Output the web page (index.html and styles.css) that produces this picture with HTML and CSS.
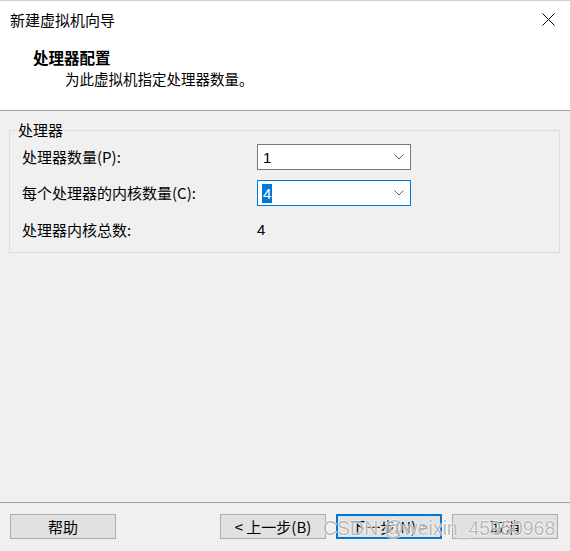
FILE: index.html
```html
<!DOCTYPE html>
<html lang="zh-CN">
<head>
<meta charset="utf-8">
<title>新建虚拟机向导</title>
<link rel="stylesheet" href="styles.css">
</head>
<body>
<div class="window">
  <div class="top">
    <div class="titlebar">
      <span class="title">新建虚拟机向导</span>
      <svg class="close" width="13" height="13" viewBox="0 0 13 13"><path d="M0.5 0.5 L12.5 12.5 M12.5 0.5 L0.5 12.5" stroke="#000" stroke-width="1" fill="none"/></svg>
    </div>
    <div class="heading">处理器配置</div>
    <div class="sub">为此虚拟机指定处理器数量。</div>
  </div>
  <div class="content">
    <fieldset class="group">
      <legend>处理器</legend>
      <div class="row first">
        <span class="label">处理器数量(P):</span>
        <div class="combo"><span class="val">1</span><svg class="chev" width="10" height="6" viewBox="0 0 10 6"><path d="M0.5 0.5 L5 5 L9.5 0.5" stroke="#5a5a5a" stroke-width="1" fill="none"/></svg></div>
      </div>
      <div class="row">
        <span class="label">每个处理器的内核数量(C):</span>
        <div class="combo focus"><span class="val"><span class="sel">4</span></span><svg class="chev" width="10" height="6" viewBox="0 0 10 6"><path d="M0.5 0.5 L5 5 L9.5 0.5" stroke="#5a5a5a" stroke-width="1" fill="none"/></svg></div>
      </div>
      <div class="row total">
        <span class="label">处理器内核总数:</span>
        <span class="num">4</span>
      </div>
    </fieldset>
  </div>
  <div class="footer">
    <button class="btn">帮助</button>
    <div class="right">
      <button class="btn">&lt; 上一步(B)</button>
      <button class="btn default">下一步(N) &gt;</button>
      <button class="btn">取消</button>
    </div>
  </div>
  <div class="watermark">CSDN @weixin_45950968</div>
</div>
</body>
</html>
```
FILE: styles.css
```css
html, body {
  margin: 0;
  padding: 0;
}
body {
  font-family: "Noto Sans CJK SC", "Microsoft YaHei", sans-serif;
  font-size: 14.5px;
  color: #000;
  background: #f0f0f0;
}
.window {
  position: relative;
  width: 570px;
  height: 551px;
  display: flex;
  flex-direction: column;
  background: #f0f0f0;
  overflow: hidden;
}
.top {
  background: #fff;
  border-top: 1px solid #cfcfcf;
  border-bottom: 1px solid #a0a0a0;
  box-sizing: border-box;
  height: 111px;
}
.titlebar {
  height: 37px;
  display: flex;
  align-items: center;
  justify-content: space-between;
  padding: 0 15px 0 10px;
}
.title {
  font-size: 15px;
  line-height: 20px;
}
.close {
  display: block;
}
.heading {
  margin: 9px 0 0 33px;
  font-size: 15.5px;
  font-weight: bold;
  line-height: 20px;
}
.sub {
  margin: 2px 0 0 65px;
  line-height: 20px;
}
.content {
  flex: 1;
  padding-top: 9px;
}
.group {
  margin: 0 10px 0 9px;
  padding: 0 12px 12px 12px;
  border: 1px solid #dcdcdc;
  min-width: 0;
}
.group legend {
  padding: 0 1px;
  margin-left: -5px;
  line-height: 20px;
  font-size: 15px;
}
.row {
  display: flex;
  align-items: center;
  height: 26px;
  margin-top: 10px;
}
.row.first {
  margin-top: 4px;
}
.row.total {
  height: 20px;
  margin-top: 14px;
}
.label {
  width: 235px;
  line-height: 20px;
  font-size: 15px;
}
.combo {
  width: 154px;
  height: 26px;
  box-sizing: border-box;
  border: 1px solid #7a7a7a;
  background: #fff;
  display: flex;
  align-items: center;
  justify-content: space-between;
  padding: 0 5px 0 5px;
}
.combo.focus {
  border-color: #0078d7;
  padding-left: 4px;
}
.val {
  font-family: "Liberation Sans", Arial, sans-serif;
  font-size: 15px;
  line-height: 19px;
}
.sel {
  display: inline-block;
  background: #0078d7;
  color: #fff;
  padding: 0 1px;
}
.chev {
  display: block;
  margin-right: 1px;
}
.num {
  font-family: "Liberation Sans", Arial, sans-serif;
  font-size: 15px;
  line-height: 20px;
}
.footer {
  border-top: 1px solid #a0a0a0;
  padding: 11px 12px 12px 10px;
  display: flex;
  justify-content: space-between;
}
.right {
  display: flex;
  gap: 10px;
}
.btn {
  width: 106px;
  height: 25px;
  box-sizing: border-box;
  background: #e1e1e1;
  border: 1px solid #adadad;
  font-family: "Noto Sans CJK SC", "Microsoft YaHei", sans-serif;
  font-size: 15px;
  line-height: 20px;
  padding: 0;
  color: #000;
}
.btn.default {
  border: 2px solid #0078d7;
}
.watermark {
  position: absolute;
  left: 323px;
  top: 517px;
  font-family: "Liberation Sans", Arial, sans-serif;
  font-size: 19.5px;
  line-height: 22px;
  color: rgba(120, 120, 120, 0.5);
  text-shadow: 1px 0 0 rgba(255,255,255,0.5), -1px 0 0 rgba(255,255,255,0.5), 0 1px 0 rgba(255,255,255,0.5), 0 -1px 0 rgba(255,255,255,0.5);
  white-space: nowrap;
}
```
